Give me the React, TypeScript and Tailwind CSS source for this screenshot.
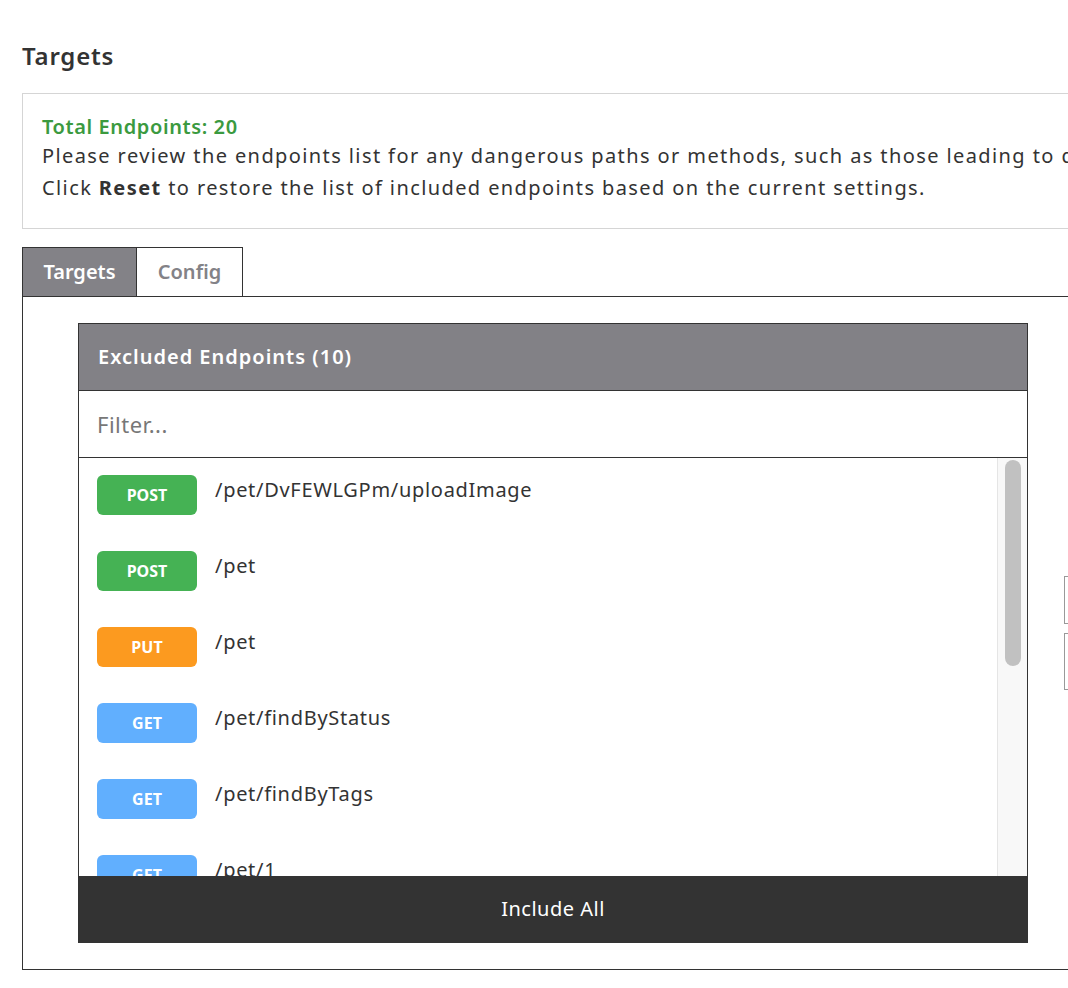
const rows: { m: 'POST' | 'PUT' | 'GET'; p: string }[] = [
  { m: 'POST', p: '/pet/DvFEWLGPm/uploadImage' },
  { m: 'POST', p: '/pet' },
  { m: 'PUT', p: '/pet' },
  { m: 'GET', p: '/pet/findByStatus' },
  { m: 'GET', p: '/pet/findByTags' },
  { m: 'GET', p: '/pet/1' },
  { m: 'GET', p: '/pet/2' },
];

const badge = {
  POST: 'bg-[#45b254]',
  PUT: 'bg-[#fc9a1f]',
  GET: 'bg-[#61affe]',
};

export default function App() {
  return (
    <div className="h-[988px] w-[1068px] overflow-hidden bg-white font-['Open_Sans',sans-serif] text-[#333]">
      <div className="w-[1200px] pl-[22px] pt-[40px]">
        <h1 className="text-[24px] font-semibold leading-[32px] tracking-[0.8px]">Targets</h1>
        <div className="mt-[21px] h-[136px] border border-[#d5d5d5] px-[19px] pt-[20px] text-[20px] leading-[32px] tracking-[1.4px]">
          <div className="font-semibold leading-[26px] tracking-[0.6px] text-[#3b9a3f]">Total Endpoints: 20</div>
          <div className="whitespace-nowrap">
            Please review the endpoints list for any dangerous paths or methods, such as those leading to deletion of data.
          </div>
          <div>
            Click <b>Reset</b> to restore the list of included endpoints based on the current settings.
          </div>
        </div>
        <div className="mt-[18px] flex">
          <div className="flex h-[50px] w-[115px] items-center justify-center border border-[#333] bg-[#838287] text-[20px] font-semibold text-white">
            Targets
          </div>
          <div className="flex h-[50px] w-[106px] items-center justify-center border border-l-0 border-[#333] text-[20px] font-semibold text-[#838287]">
            Config
          </div>
        </div>
        <div className="-mt-px flex h-[674px] gap-[36px] border border-[#333] pl-[55px] pt-[26px]">
          <div className="flex h-[620px] w-[950px] shrink-0 flex-col border border-[#333]">
            <div className="flex h-[66px] items-center bg-[#828186] px-[19px] text-[20px] font-semibold tracking-[1px] text-white">
              Excluded Endpoints (10)
            </div>
            <div className="flex h-[68px] items-center border-y border-[#333] px-[18px] text-[22px] tracking-[0.5px] text-[#777]">
              Filter...
            </div>
            <div className="relative min-h-0 flex-1 overflow-hidden">
              <div className="pr-[30px]">
                {rows.map((r, i) => (
                  <div key={i} className="flex h-[76px] items-start gap-[18px] pl-[18px] pt-[17px]">
                    <span
                      className={`flex h-[40px] w-[100px] shrink-0 items-center justify-center rounded-[6px] text-[16px] font-bold text-white ${badge[r.m]}`}
                    >
                      {r.m}
                    </span>
                    <span className="text-[20px] leading-[30px] tracking-[0.7px]">{r.p}</span>
                  </div>
                ))}
              </div>
              <div className="absolute right-0 top-0 h-full w-[30px] border-l border-[#e5e5e5] bg-[#f8f8f8]">
                <div className="ml-[7px] mt-[2px] h-[206px] w-[16px] rounded-full bg-[#c1c1c1]" />
              </div>
            </div>
            <div className="flex h-[66px] items-center justify-center bg-[#333] text-[20px] tracking-[0.5px] text-white">
              Include All
            </div>
          </div>
          <div className="flex flex-col gap-[9px] pt-[253px]">
            <div className="h-[48px] w-[60px] border border-[#999]" />
            <div className="h-[57px] w-[60px] border border-[#999]" />
          </div>
        </div>
      </div>
    </div>
  );
}
